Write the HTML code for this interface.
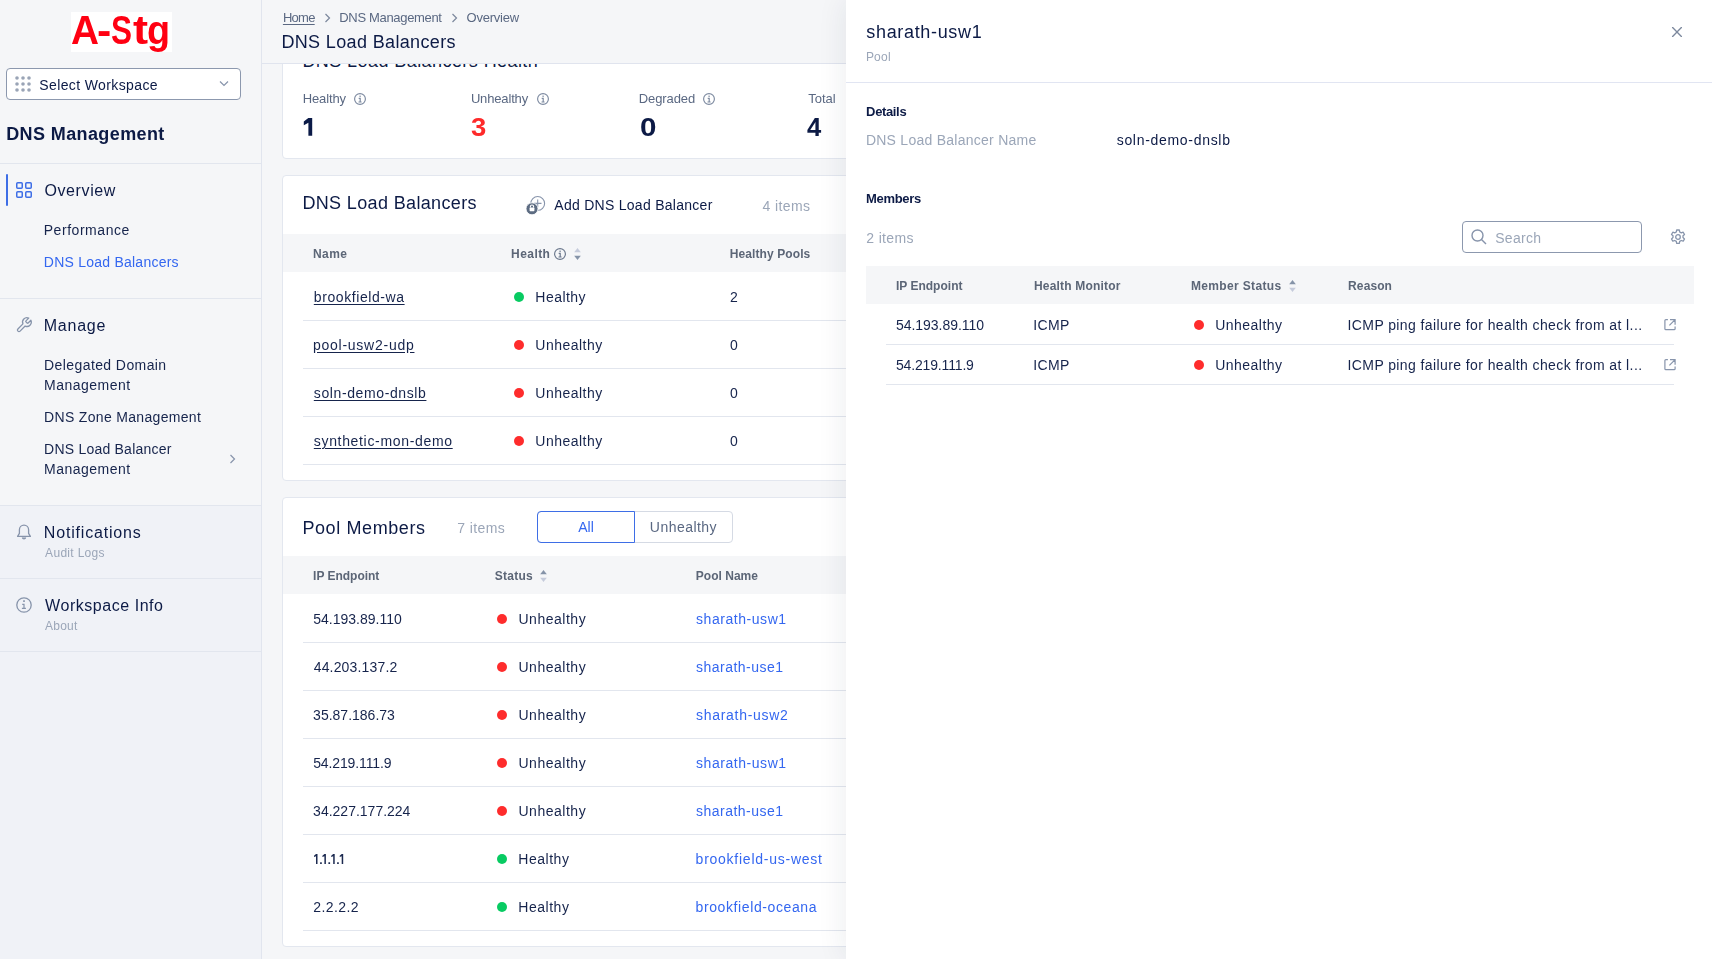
<!DOCTYPE html>
<html><head><meta charset="utf-8">
<style>
*{box-sizing:border-box;margin:0;padding:0}
html,body{width:1712px;height:959px;overflow:hidden;background:#f5f6f8;font-family:"Liberation Sans",sans-serif}
.a{position:absolute}
.t{position:absolute;white-space:nowrap;font-family:"Liberation Sans",sans-serif}
.hl{position:absolute;height:1px;background:#e2e6ee}
.dot{position:absolute;width:10px;height:10px;border-radius:50%}
.r{background:#fe2c2c}.g{background:#08cb62}
svg{position:absolute;overflow:visible}
</style></head><body>
<!-- main background layers -->
<div class="a" style="left:0;top:0;width:262px;height:959px;background:#f5f6f8;border-right:1px solid #e1e5ee"></div>
<div class="a" style="left:0;top:505px;width:261px;height:454px;background:#f0f2f7"></div>
<div class="hl" style="left:0;top:163px;width:261px"></div>
<div class="hl" style="left:0;top:298px;width:261px"></div>
<div class="hl" style="left:0;top:505px;width:261px"></div>
<div class="hl" style="left:0;top:578px;width:261px"></div>
<div class="hl" style="left:0;top:651px;width:261px"></div>
<!-- logo -->
<div class="a" style="left:71px;top:12px;width:101px;height:40px;background:#fff"></div>
<!-- workspace select -->
<div class="a" style="left:6px;top:68px;width:235px;height:32px;background:#fff;border:1px solid #8c98ae;border-radius:4px"></div>
<svg style="left:15px;top:76px" width="16" height="16" viewBox="0 0 16 16" fill="#9aa4b6">
<circle cx="2" cy="2" r="1.8"/><circle cx="8" cy="2" r="1.8"/><circle cx="14" cy="2" r="1.8"/>
<circle cx="2" cy="8" r="1.8"/><circle cx="8" cy="8" r="1.8"/><circle cx="14" cy="8" r="1.8"/>
<circle cx="2" cy="14" r="1.8"/><circle cx="8" cy="14" r="1.8"/><circle cx="14" cy="14" r="1.8"/></svg>
<svg style="left:219px;top:80px" width="10" height="7" viewBox="0 0 10 7"><path d="M1 1.5 L5 5.5 L9 1.5" fill="none" stroke="#8794ab" stroke-width="1.2"/></svg>
<!-- overview active -->
<div class="a" style="left:6px;top:174px;width:2px;height:32px;background:#3e6ee6;border-radius:1px"></div>
<svg style="left:16px;top:182px" width="16" height="16" viewBox="0 0 16 16" fill="none" stroke="#3e6ee6" stroke-width="1.5">
<rect x="0.75" y="0.75" width="5.5" height="5.5" rx="1"/><rect x="9.75" y="0.75" width="5.5" height="5.5" rx="1"/>
<rect x="0.75" y="9.75" width="5.5" height="5.5" rx="1"/><rect x="9.75" y="9.75" width="5.5" height="5.5" rx="1"/></svg>
<!-- wrench -->
<svg style="left:16px;top:317px" width="16" height="16" viewBox="1 1 22 22" fill="none" stroke="#8794ab" stroke-width="1.8" stroke-linejoin="round" stroke-linecap="round">
<path d="M14.7 6.3a1 1 0 0 0 0 1.4l1.6 1.6a1 1 0 0 0 1.4 0l3.77-3.77a6 6 0 0 1-7.94 7.94l-6.91 6.91a2.12 2.12 0 0 1-3-3l6.91-6.91a6 6 0 0 1 7.94-7.94l-3.76 3.76z"/></svg>
<svg style="left:229px;top:454px" width="7" height="10" viewBox="0 0 7 10"><path d="M1.5 1 L5.5 5 L1.5 9" fill="none" stroke="#8794ab" stroke-width="1.2"/></svg>
<!-- bell -->
<svg style="left:16px;top:524px" width="16" height="16" viewBox="0 0 16 16" fill="none" stroke="#8794ab" stroke-width="1.3" stroke-linejoin="round">
<path d="M8 1.2 a4.6 4.6 0 0 0 -4.6 4.6 v3.6 L1.6 12.4 h12.8 L12.6 9.4 V5.8 A4.6 4.6 0 0 0 8 1.2 z"/><path d="M6.3 13.6 a1.8 1.8 0 0 0 3.4 0" fill="#8794ab"/></svg>
<!-- info circle -->
<svg style="left:16px;top:597px" width="16" height="16" viewBox="0 0 16 16" fill="none" stroke="#8794ab" stroke-width="1.3">
<circle cx="8" cy="8" r="7.2"/><path d="M6.2 7.4 H8 V11.4 M5.9 11.4 H9.9" stroke-width="1.2"/><rect x="7.1" y="3.3" width="1.8" height="1.6" fill="#8794ab" stroke="none"/></svg>

<!-- main header -->
<div class="a" style="left:262px;top:0;width:600px;height:64px;background:#f5f6f8;border-bottom:1px solid #e0e4ee;z-index:5"></div>
<svg style="left:324px;top:13px;z-index:6" width="7" height="10" viewBox="0 0 7 10"><path d="M1.5 1 L5.5 5 L1.5 9" fill="none" stroke="#7b879c" stroke-width="1.2"/></svg>
<svg style="left:451px;top:13px;z-index:6" width="7" height="10" viewBox="0 0 7 10"><path d="M1.5 1 L5.5 5 L1.5 9" fill="none" stroke="#7b879c" stroke-width="1.2"/></svg>

<!-- health card -->
<div class="a" style="left:282px;top:-20px;width:600px;height:179px;background:#fff;border:1px solid #e3e7ef;border-radius:4px"></div>
<div class="a" style="left:0;top:0;z-index:4"><span class="t" style="left:302.4px;top:52px;font-size:18px;line-height:18px;color:#0c1a45;letter-spacing:0.429px;">DNS Load Balancers Health</span></div>
<!-- LB card -->
<div class="a" style="left:282px;top:175px;width:600px;height:306px;background:#fff;border:1px solid #e3e7ef;border-radius:4px"></div>
<div class="a" style="left:283px;top:234px;width:600px;height:38px;background:#f5f6f8"></div>
<div class="hl" style="left:303px;top:320px;width:600px"></div>
<div class="hl" style="left:303px;top:368px;width:600px"></div>
<div class="hl" style="left:303px;top:416px;width:600px"></div>
<div class="hl" style="left:303px;top:464px;width:600px"></div>
<div class="dot g" style="left:514px;top:292px"></div>
<div class="dot r" style="left:514px;top:340px"></div>
<div class="dot r" style="left:514px;top:388px"></div>
<div class="dot r" style="left:514px;top:436px"></div>
<!-- Pool members card -->
<div class="a" style="left:282px;top:497px;width:600px;height:450px;background:#fff;border:1px solid #e3e7ef;border-radius:4px"></div>
<div class="a" style="left:537px;top:511px;width:196px;height:32px;border:1px solid #d5dae4;border-radius:4px"></div>
<div class="a" style="left:537px;top:511px;width:98px;height:32px;border:1px solid #3e6ee6;border-radius:4px 0 0 4px"></div>
<div class="a" style="left:283px;top:556px;width:600px;height:38px;background:#f5f6f8"></div>
<div class="hl" style="left:303px;top:642px;width:600px"></div>
<div class="hl" style="left:303px;top:690px;width:600px"></div>
<div class="hl" style="left:303px;top:738px;width:600px"></div>
<div class="hl" style="left:303px;top:786px;width:600px"></div>
<div class="hl" style="left:303px;top:834px;width:600px"></div>
<div class="hl" style="left:303px;top:882px;width:600px"></div>
<div class="hl" style="left:303px;top:930px;width:600px"></div>
<div class="dot r" style="left:497px;top:614px"></div>
<div class="dot r" style="left:497px;top:662px"></div>
<div class="dot r" style="left:497px;top:710px"></div>
<div class="dot r" style="left:497px;top:758px"></div>
<div class="dot r" style="left:497px;top:806px"></div>
<div class="dot g" style="left:497px;top:854px"></div>
<div class="dot g" style="left:497px;top:902px"></div>

<svg style="left:354.4px;top:92.7px" width="12" height="12" viewBox="0 0 12 12" fill="none" stroke="#7d8aa0" stroke-width="1.15"><circle cx="6" cy="6" r="5.4"/><path d="M4.7 5.3 H6.2 V9 M4.5 9 H7.6" stroke-width="1.2"/><rect x="5.45" y="2.6" width="1.3" height="1.3" fill="#7d8aa0" stroke="none"/></svg>
<svg style="left:536.9px;top:92.7px" width="12" height="12" viewBox="0 0 12 12" fill="none" stroke="#7d8aa0" stroke-width="1.15"><circle cx="6" cy="6" r="5.4"/><path d="M4.7 5.3 H6.2 V9 M4.5 9 H7.6" stroke-width="1.2"/><rect x="5.45" y="2.6" width="1.3" height="1.3" fill="#7d8aa0" stroke="none"/></svg>
<svg style="left:702.9px;top:92.7px" width="12" height="12" viewBox="0 0 12 12" fill="none" stroke="#7d8aa0" stroke-width="1.15"><circle cx="6" cy="6" r="5.4"/><path d="M4.7 5.3 H6.2 V9 M4.5 9 H7.6" stroke-width="1.2"/><rect x="5.45" y="2.6" width="1.3" height="1.3" fill="#7d8aa0" stroke="none"/></svg>
<svg style="left:524px;top:194px" width="24" height="24" viewBox="0 0 24 24"><circle cx="13.7" cy="9.4" r="6.9" fill="none" stroke="#8794ab" stroke-width="1.1"/><path d="M13.7 5.6 V13.2 M9.9 9.4 H17.5" stroke="#8794ab" stroke-width="1.1"/><circle cx="8" cy="14.8" r="6" fill="#5d6c82" stroke="#fff" stroke-width="0.8"/><path d="M6.4 13.6 V12.6 a1.6 1.6 0 0 1 3.2 0 V13.6" fill="none" stroke="#fff" stroke-width="1.1"/><rect x="5.6" y="13.6" width="4.8" height="3.6" rx="0.6" fill="#fff"/></svg>
<svg style="left:553.8px;top:247.6px" width="12" height="12" viewBox="0 0 12 12" fill="none" stroke="#6a778c" stroke-width="1.15"><circle cx="6" cy="6" r="5.4"/><path d="M4.7 5.3 H6.2 V9 M4.5 9 H7.6" stroke-width="1.2"/><rect x="5.45" y="2.6" width="1.3" height="1.3" fill="#6a778c" stroke="none"/></svg>
<svg style="left:573.5px;top:247.8px" width="7" height="12" viewBox="0 0 7 12"><path d="M3.5 0 L6.8 4.2 H0.2 Z" fill="#c5cbdb"/><path d="M3.5 12 L6.8 7.8 H0.2 Z" fill="#8593a8"/></svg>
<svg style="left:540px;top:569.8px" width="7" height="12" viewBox="0 0 7 12"><path d="M3.5 0 L6.8 4.2 H0.2 Z" fill="#8593a8"/><path d="M3.5 12 L6.8 7.8 H0.2 Z" fill="#c5cbdb"/></svg>

<svg style="left:300px;top:115px" width="16" height="24" viewBox="300 115 16 24"><path d="M308.3 118.1 H312.2 V135.8 H308.4 V122.7 L303.8 125.2 V121.5 Z" fill="#0b1a47"/></svg>
<svg style="left:305px;top:850px" width="45" height="18" viewBox="305 850 45 18" fill="#1c2a50"><path d="M316.0 854 H317.5 V864 H316.0 V856.3 L314.0 857.0 V855.7 Z M324.4 854 H325.9 V864 H324.4 V856.3 L322.4 857.0 V855.7 Z M333.2 854 H334.7 V864 H333.2 V856.3 L331.2 857.0 V855.7 Z M341.7 854 H343.2 V864 H341.7 V856.3 L339.7 857.0 V855.7 Z"/><rect x="320.1" y="862.3" width="1.7" height="1.7" rx="0.3"/><rect x="328.4" y="862.3" width="1.7" height="1.7" rx="0.3"/><rect x="337.1" y="862.3" width="1.7" height="1.7" rx="0.3"/></svg>
<!-- drawer -->
<div class="a" style="left:846px;top:0;width:866px;height:959px;background:#fff;box-shadow:-3px 0 26px rgba(30,40,70,0.075);z-index:10"></div>
<div class="a" style="z-index:11;left:0;top:0;width:1712px;height:959px">
<svg style="left:1672px;top:27px" width="10" height="10" viewBox="0 0 10 10"><path d="M0.6 0.6 L9.4 9.4 M9.4 0.6 L0.6 9.4" stroke="#7c889d" stroke-width="1.35" stroke-linecap="round"/></svg>
<div class="hl" style="left:846px;top:82px;width:866px;background:#e1e5f2"></div>
<div class="a" style="left:1462px;top:221px;width:180px;height:32px;border:1px solid #8c98ae;border-radius:4px"></div>
<svg style="left:1471px;top:229px" width="16" height="16" viewBox="0 0 16 16" fill="none" stroke="#8794ab" stroke-width="1.4"><circle cx="6.5" cy="6.5" r="5.5"/><path d="M10.5 10.5 L15 15"/></svg>
<svg style="left:1670px;top:229px" width="16" height="16" viewBox="0 0 16 16" fill="none" stroke="#8794ab" stroke-width="1.3"><circle cx="8" cy="8" r="2.3"/><path d="M6.7 1 h2.6 l0.4 2 l1.6 0.9 l1.9 -0.7 l1.3 2.3 l-1.5 1.3 v1.8 l1.5 1.3 l-1.3 2.3 l-1.9 -0.7 l-1.6 0.9 l-0.4 2 h-2.6 l-0.4 -2 l-1.6 -0.9 l-1.9 0.7 l-1.3 -2.3 l1.5 -1.3 v-1.8 l-1.5 -1.3 l1.3 -2.3 l1.9 0.7 l1.6 -0.9 z" stroke-linejoin="round"/></svg>
<div class="a" style="left:866px;top:266px;width:828px;height:38px;background:#f5f6f8"></div>
<div class="hl" style="left:886px;top:344px;width:788px"></div>
<div class="hl" style="left:886px;top:384px;width:788px"></div>
<div class="dot r" style="left:1194px;top:320px"></div>
<div class="dot r" style="left:1194px;top:360px"></div>
<svg style="left:1664px;top:318px" width="13" height="13" viewBox="0 0 13 13" fill="none" stroke="#8794ab" stroke-width="1.2"><path d="M3.9 1.6 H1.9 a1 1 0 0 0 -1 1 V10.7 a1 1 0 0 0 1 1 H10.1 a1 1 0 0 0 1 -1 V8.6 M6 1.6 H11.1 V6.7 M11.1 1.6 L5.4 7.3"/></svg>
<svg style="left:1664px;top:358px" width="13" height="13" viewBox="0 0 13 13" fill="none" stroke="#8794ab" stroke-width="1.2"><path d="M3.9 1.6 H1.9 a1 1 0 0 0 -1 1 V10.7 a1 1 0 0 0 1 1 H10.1 a1 1 0 0 0 1 -1 V8.6 M6 1.6 H11.1 V6.7 M11.1 1.6 L5.4 7.3"/></svg>
<svg style="left:1288.6px;top:279.8px" width="7" height="12" viewBox="0 0 7 12"><path d="M3.5 0 L6.8 4.2 H0.2 Z" fill="#8593a8"/><path d="M3.5 12 L6.8 7.8 H0.2 Z" fill="#c5cbdb"/></svg>
</div>
<div class="a" style="z-index:12;left:0;top:0;width:1712px;height:959px;will-change:transform">
<span class="t" style="left:71.2px;top:10px;font-size:40px;line-height:40px;color:#ff0012;font-weight:700;transform:scaleX(0.9699);transform-origin:0 0;">A</span>
<span class="t" style="left:97.4px;top:10px;font-size:40px;line-height:40px;color:#ff0012;font-weight:700;transform:scaleX(1.0702);transform-origin:0 0;">-</span>
<span class="t" style="left:111.1px;top:10px;font-size:40px;line-height:40px;color:#ff0012;font-weight:700;transform:scaleX(0.7867);transform-origin:0 0;">S</span>
<span class="t" style="left:132.8px;top:10px;font-size:40px;line-height:40px;color:#ff0012;font-weight:700;transform:scaleX(1.1314);transform-origin:0 0;">t</span>
<span class="t" style="left:147.3px;top:10px;font-size:40px;line-height:40px;color:#ff0012;font-weight:700;transform:scaleX(0.9447);transform-origin:0 0;">g</span>
<span class="t" style="left:39.3px;top:78px;font-size:14px;line-height:14px;color:#0c1a45;letter-spacing:0.383px;">Select Workspace</span>
<span class="t" style="left:6.2px;top:125px;font-size:18px;line-height:18px;color:#0c1a45;font-weight:700;letter-spacing:0.395px;">DNS Management</span>
<span class="t" style="left:44.4px;top:183px;font-size:16px;line-height:16px;color:#0c1a45;letter-spacing:0.616px;">Overview</span>
<span class="t" style="left:43.7px;top:223px;font-size:14px;line-height:14px;color:#16244c;letter-spacing:0.552px;">Performance</span>
<span class="t" style="left:43.8px;top:255px;font-size:14px;line-height:14px;color:#3467f0;letter-spacing:0.238px;">DNS Load Balancers</span>
<span class="t" style="left:43.8px;top:318px;font-size:16px;line-height:16px;color:#0c1a45;letter-spacing:0.741px;">Manage</span>
<span class="t" style="left:44.1px;top:358px;font-size:14px;line-height:14px;color:#16244c;letter-spacing:0.405px;">Delegated Domain</span>
<span class="t" style="left:44.1px;top:378px;font-size:14px;line-height:14px;color:#16244c;letter-spacing:0.489px;">Management</span>
<span class="t" style="left:44.1px;top:410px;font-size:14px;line-height:14px;color:#16244c;letter-spacing:0.321px;">DNS Zone Management</span>
<span class="t" style="left:44.1px;top:442px;font-size:14px;line-height:14px;color:#16244c;letter-spacing:0.221px;">DNS Load Balancer</span>
<span class="t" style="left:44.1px;top:462px;font-size:14px;line-height:14px;color:#16244c;letter-spacing:0.489px;">Management</span>
<span class="t" style="left:43.8px;top:525px;font-size:16px;line-height:16px;color:#0c1a45;letter-spacing:0.814px;">Notifications</span>
<span class="t" style="left:45.1px;top:547px;font-size:12px;line-height:12px;color:#9ba6b8;letter-spacing:0.308px;">Audit Logs</span>
<span class="t" style="left:45.1px;top:598px;font-size:16px;line-height:16px;color:#0c1a45;letter-spacing:0.540px;">Workspace Info</span>
<span class="t" style="left:45.1px;top:620px;font-size:12px;line-height:12px;color:#9ba6b8;letter-spacing:0.222px;">About</span>
<span class="t" style="left:282.9px;top:11px;font-size:13px;line-height:13px;color:#5a6882;letter-spacing:-0.722px;text-decoration:underline;text-underline-offset:2px">Home</span>
<span class="t" style="left:339.3px;top:11px;font-size:13px;line-height:13px;color:#5a6882;letter-spacing:-0.327px;">DNS Management</span>
<span class="t" style="left:466.6px;top:11px;font-size:13px;line-height:13px;color:#5a6882;letter-spacing:-0.248px;">Overview</span>
<span class="t" style="left:281.4px;top:33px;font-size:18px;line-height:18px;color:#0c1a45;letter-spacing:0.358px;">DNS Load Balancers</span>
<span class="t" style="left:302.8px;top:92px;font-size:13px;line-height:13px;color:#5a6882;letter-spacing:-0.154px;">Healthy</span>
<span class="t" style="left:470.9px;top:92px;font-size:13px;line-height:13px;color:#5a6882;letter-spacing:-0.159px;">Unhealthy</span>
<span class="t" style="left:638.8px;top:92px;font-size:13px;line-height:13px;color:#5a6882;letter-spacing:-0.098px;">Degraded</span>
<span class="t" style="left:808.3px;top:92px;font-size:13px;line-height:13px;color:#5a6882;letter-spacing:-0.024px;">Total</span>
<span class="t" style="left:471.3px;top:115px;font-size:25px;line-height:25px;color:#fe2a2a;font-weight:700;transform:scaleX(1.0993);transform-origin:0 0;">3</span>
<span class="t" style="left:639.5px;top:115px;font-size:25px;line-height:25px;color:#0c1a45;font-weight:700;transform:scaleX(1.1815);transform-origin:0 0;">0</span>
<span class="t" style="left:807.2px;top:115px;font-size:25px;line-height:25px;color:#0c1a45;font-weight:700;transform:scaleX(1.0240);transform-origin:0 0;">4</span>
<span class="t" style="left:302.4px;top:194px;font-size:18px;line-height:18px;color:#0c1a45;letter-spacing:0.358px;">DNS Load Balancers</span>
<span class="t" style="left:554.3px;top:198px;font-size:14px;line-height:14px;color:#0c1a45;letter-spacing:0.274px;">Add DNS Load Balancer</span>
<span class="t" style="left:762.5px;top:199px;font-size:14px;line-height:14px;color:#9ba6b8;letter-spacing:0.404px;">4 items</span>
<span class="t" style="left:313.1px;top:248px;font-size:12px;line-height:12px;color:#5c6677;font-weight:700;letter-spacing:0.359px;">Name</span>
<span class="t" style="left:511.1px;top:248px;font-size:12px;line-height:12px;color:#5c6677;font-weight:700;letter-spacing:0.423px;">Health</span>
<span class="t" style="left:729.8px;top:248px;font-size:12px;line-height:12px;color:#5c6677;font-weight:700;letter-spacing:0.092px;">Healthy Pools</span>
<span class="t" style="left:313.8px;top:290px;font-size:14px;line-height:14px;color:#16244c;letter-spacing:0.580px;text-decoration:underline;text-underline-offset:2px">brookfield-wa</span>
<span class="t" style="left:535.3px;top:290px;font-size:14px;line-height:14px;color:#16244c;letter-spacing:0.476px;">Healthy</span>
<span class="t" style="left:730.0px;top:290px;font-size:14px;line-height:14px;color:#16244c;">2</span>
<span class="t" style="left:313.0px;top:338px;font-size:14px;line-height:14px;color:#16244c;letter-spacing:0.741px;text-decoration:underline;text-underline-offset:2px">pool-usw2-udp</span>
<span class="t" style="left:535.3px;top:338px;font-size:14px;line-height:14px;color:#16244c;letter-spacing:0.491px;">Unhealthy</span>
<span class="t" style="left:730.0px;top:338px;font-size:14px;line-height:14px;color:#16244c;">0</span>
<span class="t" style="left:313.8px;top:386px;font-size:14px;line-height:14px;color:#16244c;letter-spacing:0.608px;text-decoration:underline;text-underline-offset:2px">soln-demo-dnslb</span>
<span class="t" style="left:535.3px;top:386px;font-size:14px;line-height:14px;color:#16244c;letter-spacing:0.491px;">Unhealthy</span>
<span class="t" style="left:730.0px;top:386px;font-size:14px;line-height:14px;color:#16244c;">0</span>
<span class="t" style="left:313.8px;top:434px;font-size:14px;line-height:14px;color:#16244c;letter-spacing:0.670px;text-decoration:underline;text-underline-offset:2px">synthetic-mon-demo</span>
<span class="t" style="left:535.3px;top:434px;font-size:14px;line-height:14px;color:#16244c;letter-spacing:0.491px;">Unhealthy</span>
<span class="t" style="left:730.0px;top:434px;font-size:14px;line-height:14px;color:#16244c;">0</span>
<span class="t" style="left:302.4px;top:519px;font-size:18px;line-height:18px;color:#0c1a45;letter-spacing:0.602px;">Pool Members</span>
<span class="t" style="left:457.2px;top:521px;font-size:14px;line-height:14px;color:#9ba6b8;letter-spacing:0.410px;">7 items</span>
<span class="t" style="left:578.2px;top:520px;font-size:14px;line-height:14px;color:#3467f0;">All</span>
<span class="t" style="left:649.8px;top:520px;font-size:14px;line-height:14px;color:#5a6882;letter-spacing:0.469px;">Unhealthy</span>
<span class="t" style="left:313.1px;top:570px;font-size:12px;line-height:12px;color:#5c6677;font-weight:700;letter-spacing:-0.018px;">IP Endpoint</span>
<span class="t" style="left:494.8px;top:570px;font-size:12px;line-height:12px;color:#5c6677;font-weight:700;letter-spacing:0.260px;">Status</span>
<span class="t" style="left:695.8px;top:570px;font-size:12px;line-height:12px;color:#5c6677;font-weight:700;letter-spacing:0.016px;">Pool Name</span>
<span class="t" style="left:313.2px;top:612px;font-size:14px;line-height:14px;color:#16244c;letter-spacing:0.015px;">54.193.89.110</span>
<span class="t" style="left:518.5px;top:612px;font-size:14px;line-height:14px;color:#16244c;letter-spacing:0.513px;">Unhealthy</span>
<span class="t" style="left:696.0px;top:612px;font-size:14px;line-height:14px;color:#3467f0;letter-spacing:0.552px;">sharath-usw1</span>
<span class="t" style="left:313.7px;top:660px;font-size:14px;line-height:14px;color:#16244c;letter-spacing:0.162px;">44.203.137.2</span>
<span class="t" style="left:518.5px;top:660px;font-size:14px;line-height:14px;color:#16244c;letter-spacing:0.513px;">Unhealthy</span>
<span class="t" style="left:696.0px;top:660px;font-size:14px;line-height:14px;color:#3467f0;letter-spacing:0.476px;">sharath-use1</span>
<span class="t" style="left:313.1px;top:708px;font-size:14px;line-height:14px;color:#16244c;">35.87.186.73</span>
<span class="t" style="left:518.5px;top:708px;font-size:14px;line-height:14px;color:#16244c;letter-spacing:0.513px;">Unhealthy</span>
<span class="t" style="left:696.0px;top:708px;font-size:14px;line-height:14px;color:#3467f0;letter-spacing:0.706px;">sharath-usw2</span>
<span class="t" style="left:313.2px;top:756px;font-size:14px;line-height:14px;color:#16244c;letter-spacing:-0.123px;">54.219.111.9</span>
<span class="t" style="left:518.5px;top:756px;font-size:14px;line-height:14px;color:#16244c;letter-spacing:0.513px;">Unhealthy</span>
<span class="t" style="left:696.0px;top:756px;font-size:14px;line-height:14px;color:#3467f0;letter-spacing:0.552px;">sharath-usw1</span>
<span class="t" style="left:313.1px;top:804px;font-size:14px;line-height:14px;color:#16244c;">34.227.177.224</span>
<span class="t" style="left:518.5px;top:804px;font-size:14px;line-height:14px;color:#16244c;letter-spacing:0.513px;">Unhealthy</span>
<span class="t" style="left:696.0px;top:804px;font-size:14px;line-height:14px;color:#3467f0;letter-spacing:0.476px;">sharath-use1</span>
<span class="t" style="left:518.3px;top:852px;font-size:14px;line-height:14px;color:#16244c;letter-spacing:0.519px;">Healthy</span>
<span class="t" style="left:695.6px;top:852px;font-size:14px;line-height:14px;color:#3467f0;letter-spacing:0.748px;">brookfield-us-west</span>
<span class="t" style="left:313.2px;top:900px;font-size:14px;line-height:14px;color:#16244c;letter-spacing:0.440px;">2.2.2.2</span>
<span class="t" style="left:518.3px;top:900px;font-size:14px;line-height:14px;color:#16244c;letter-spacing:0.519px;">Healthy</span>
<span class="t" style="left:695.6px;top:900px;font-size:14px;line-height:14px;color:#3467f0;letter-spacing:0.598px;">brookfield-oceana</span>
<span class="t" style="left:866.3px;top:23px;font-size:18px;line-height:18px;color:#0c1a45;letter-spacing:0.665px;">sharath-usw1</span>
<span class="t" style="left:865.9px;top:51px;font-size:12px;line-height:12px;color:#9ba6b8;letter-spacing:0.228px;">Pool</span>
<span class="t" style="left:866.1px;top:105px;font-size:13px;line-height:13px;color:#0c1a45;font-weight:700;letter-spacing:-0.353px;">Details</span>
<span class="t" style="left:865.9px;top:133px;font-size:14px;line-height:14px;color:#9ba6b8;letter-spacing:0.256px;">DNS Load Balancer Name</span>
<span class="t" style="left:1116.7px;top:133px;font-size:14px;line-height:14px;color:#0c1a45;letter-spacing:0.695px;">soln-demo-dnslb</span>
<span class="t" style="left:866.1px;top:192px;font-size:13px;line-height:13px;color:#0c1a45;font-weight:700;letter-spacing:-0.342px;">Members</span>
<span class="t" style="left:866.3px;top:231px;font-size:14px;line-height:14px;color:#9ba6b8;letter-spacing:0.343px;">2 items</span>
<span class="t" style="left:1495.2px;top:231px;font-size:14px;line-height:14px;color:#9ba6b8;letter-spacing:0.289px;">Search</span>
<span class="t" style="left:895.9px;top:280px;font-size:12px;line-height:12px;color:#5c6677;font-weight:700;letter-spacing:0.016px;">IP Endpoint</span>
<span class="t" style="left:1033.9px;top:280px;font-size:12px;line-height:12px;color:#5c6677;font-weight:700;letter-spacing:0.200px;">Health Monitor</span>
<span class="t" style="left:1191.0px;top:280px;font-size:12px;line-height:12px;color:#5c6677;font-weight:700;letter-spacing:0.339px;">Member Status</span>
<span class="t" style="left:1348.1px;top:280px;font-size:12px;line-height:12px;color:#5c6677;font-weight:700;letter-spacing:0.096px;">Reason</span>
<span class="t" style="left:895.9px;top:318px;font-size:14px;line-height:14px;color:#16244c;letter-spacing:-0.031px;">54.193.89.110</span>
<span class="t" style="left:1033.2px;top:318px;font-size:14px;line-height:14px;color:#16244c;letter-spacing:0.349px;">ICMP</span>
<span class="t" style="left:1215.2px;top:318px;font-size:14px;line-height:14px;color:#16244c;letter-spacing:0.472px;">Unhealthy</span>
<span class="t" style="left:1347.5px;top:318px;font-size:14px;line-height:14px;color:#16244c;letter-spacing:0.405px;">ICMP ping failure for health check from at l...</span>
<span class="t" style="left:895.9px;top:358px;font-size:14px;line-height:14px;color:#16244c;letter-spacing:-0.150px;">54.219.111.9</span>
<span class="t" style="left:1033.2px;top:358px;font-size:14px;line-height:14px;color:#16244c;letter-spacing:0.349px;">ICMP</span>
<span class="t" style="left:1215.2px;top:358px;font-size:14px;line-height:14px;color:#16244c;letter-spacing:0.472px;">Unhealthy</span>
<span class="t" style="left:1347.5px;top:358px;font-size:14px;line-height:14px;color:#16244c;letter-spacing:0.405px;">ICMP ping failure for health check from at l...</span>
</div>
</body></html>
